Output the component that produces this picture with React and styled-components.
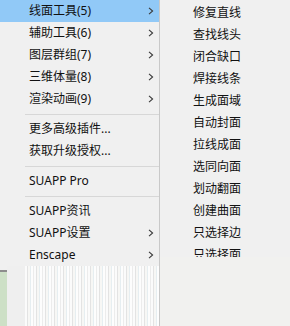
import React from 'react';
import styled, { createGlobalStyle } from 'styled-components';

const mainItems = [
  { label: '线面工具(5)', sub: true, active: true },
  { label: '辅助工具(6)', sub: true },
  { label: '图层群组(7)', sub: true },
  { label: '三维体量(8)', sub: true },
  { label: '渲染动画(9)', sub: true },
  { sep: true },
  { label: '更多高级插件...' },
  { label: '获取升级授权...' },
  { sep: true },
  { label: 'SUAPP Pro' },
  { sep: true },
  { label: 'SUAPP资讯' },
  { label: 'SUAPP设置', sub: true },
  { label: 'Enscape', sub: true },
];

const subItems = [
  '修复直线', '查找线头', '闭合缺口', '焊接线条', '生成面域', '自动封面',
  '拉线成面', '选同向面', '划动翻面', '创建曲面', '只选择边', '只选择面',
];

const Chevron = () => (
  <svg width="6" height="8" viewBox="0 0 6 8">
    <path d="M1 0.8 L4.6 4 L1 7.2" fill="none" stroke="#3a3a3a" strokeWidth="1.1" />
  </svg>
);

const App = () => {
  return (
    <Screen>
      <GlobalStyle />
      <MainMenu>
        <MenuList>
          {mainItems.map((it, i) =>
            it.sep ? (
              <Separator key={i} />
            ) : (
              <Item key={i} $active={it.active}>
                <span />
                <Label>{it.label}</Label>
                <Arrow>{it.sub && <Chevron />}</Arrow>
              </Item>
            )
          )}
        </MenuList>
        <Backdrop>
          <Edge />
          <Gutter />
          <Stripes />
        </Backdrop>
      </MainMenu>
      <SubMenu>
        <SubList>
          {subItems.map((s) => (
            <SubItem key={s}>{s}</SubItem>
          ))}
        </SubList>
      </SubMenu>
    </Screen>
  );
};

export default App;

const GlobalStyle = createGlobalStyle`
  body {
    margin: 0;
    background: #f0f0f0;
    font-family: "Noto Sans", "Noto Sans CJK SC", sans-serif;
  }
`

const Screen = styled.div`
  display: flex;
  width: 290px;
  height: 326px;
  overflow: hidden;
  background: #f0f0f0;
  color: #111;
  font-size: 12px;
`

const MainMenu = styled.div`
  width: 159px;
  display: flex;
  flex-direction: column;
`

const MenuList = styled.div`
  display: flex;
  flex-direction: column;
`

const Item = styled.div`
  height: 22px;
  display: grid;
  grid-template-columns: 29px 1fr 11px;
  align-items: center;
  background: ${(p) => (p.$active ? '#91c9f7' : 'transparent')};
`

const Label = styled.span`
  white-space: nowrap;
  line-height: 22px;
`

const Arrow = styled.span`
  display: flex;
  align-items: center;
`

const Separator = styled.div`
  height: 8px;
  display: flex;
  align-items: center;
  padding-left: 25px;
  &::after {
    content: '';
    flex: 1;
    height: 1px;
    background: #d7d7d7;
  }
`

const Backdrop = styled.div`
  flex: 1;
  display: flex;
`

const Edge = styled.div`
  width: 7px;
  margin-top: 4px;
  border-top: 2px solid #8d8d8d;
  background: #cde0c6;
`

const Gutter = styled.div`
  width: 18px;
  background: #efefef;
`

const Stripes = styled.div`
  flex: 1;
  background: repeating-linear-gradient(
    90deg,
    #fbfbfb 0 2px,
    #e3e3e3 2px 3px,
    #f7f7f5 3px 5px,
    #e6eef1 5px 6px,
    #fdfdfd 6px 8px,
    #ececec 8px 9px
  );
`

const SubMenu = styled.div`
  flex: 1;
  border-left: 1px solid #c9c9c9;
  background: #f1f1ef;
`

const SubList = styled.div`
  height: 257px;
  overflow: hidden;
  padding-top: 2px;
  box-sizing: border-box;
  background: #f0f0f0;
`

const SubItem = styled.div`
  height: 22px;
  line-height: 22px;
  padding-left: 33px;
  white-space: nowrap;
`
